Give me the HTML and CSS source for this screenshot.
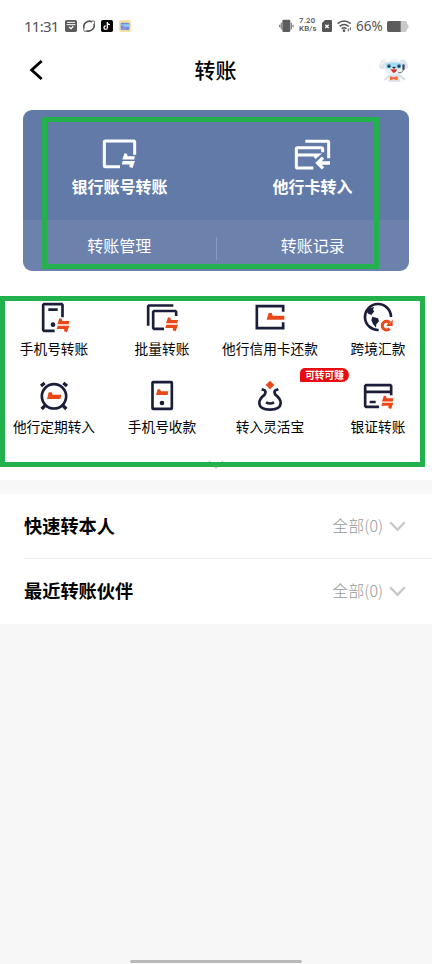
FILE: index.html
```html
<!DOCTYPE html>
<html lang="zh-CN">
<head>
<meta charset="utf-8">
<meta name="viewport" content="width=device-width">
<title>转账</title>
<link rel="stylesheet" href="styles.css">
</head>
<body>
<svg width="0" height="0" class="defs">
  <symbol id="swap" viewBox="0 0 38 42" overflow="visible">
    <path d="M7 0L14 1L16 8H37L35 18H1ZM2 22H37L30 42L21 39L22 32H-1Z"/>
  </symbol>
</svg>
<div class="screen">
  <header class="status">
    <span class="clock">11:31</span>
    <div class="status-left">
      <svg width="12" height="12" viewBox="0 0 36 36"><rect width="36" height="36" rx="5" fill="#5b5b5b"/><path d="M6 7H30M5 14H31" stroke="#fff" stroke-width="3"/><path d="M12 21L18 26L25 19" fill="none" stroke="#fff" stroke-width="4"/></svg>
      <svg width="12" height="12" viewBox="0 0 36 36"><path d="M3 25C-1 11 13 0 27 5M10 33C24 36 37 25 33 12" fill="none" stroke="#555" stroke-width="5"/><path d="M3 24Q-1 37 11 33M26 4Q39-1 33 13" fill="none" stroke="#666" stroke-width="3"/></svg>
      <svg width="12" height="12" viewBox="0 0 36 36"><rect width="36" height="36" rx="5" fill="#060606"/><path d="M19 6V23A5 5 0 1 1 14 18M19 8Q21 14 27 14" fill="none" stroke="#fff" stroke-width="4"/><path d="M22 23Q20 30 13 29" fill="none" stroke="#e64c62" stroke-width="1.5"/></svg>
      <svg width="12" height="12" viewBox="0 0 36 36"><rect width="36" height="36" rx="7" fill="#f7dfa0"/><rect x="5" y="8" width="26" height="22" rx="3" fill="#648ede"/><path d="M6 12H30V17H6Z" fill="#79bdf2"/><path d="M7 22H23V29H7Z" fill="#9692df"/><path d="M14 18H30" stroke="#fff" stroke-width="2"/></svg>
    </div>
    <div class="status-right">
      <svg width="15" height="14" viewBox="0 0 45 42"><rect x="10" y="2" width="24" height="37" rx="4" fill="#5d5d5d"/><path d="M7 11V31M2 17V25M37 11V31M42 17V25" stroke="#888" stroke-width="4"/></svg>
      <div class="speed"><span>7.20</span><span>KB/s</span></div>
      <svg width="10" height="12" viewBox="0 0 30 36"><path d="M9 0H26Q30 0 30 4V32Q30 36 26 36H4Q0 36 0 32V9Z" fill="#555"/><path d="M10 14L20 24M20 14L10 24" stroke="#fff" stroke-width="4"/></svg>
      <svg class="wifi" width="15" height="12" viewBox="0 0 45 36"><path d="M2 11Q21-5 41 11M8 19Q21 8 35 19M14 26Q21 20 29 26" fill="none" stroke="#555" stroke-width="4.5"/><circle cx="21" cy="32" r="4" fill="#555"/><path d="M34 26V34M40 22V31" stroke="#555" stroke-width="3"/></svg>
      <span class="percent">66%</span>
      <svg width="22" height="11" viewBox="0 0 66 33"><rect width="60" height="33" rx="6" fill="#c9c9c9"/><path d="M60 9Q65 10 65 17Q65 23 60 24Z" fill="#c9c9c9"/><path d="M6 0H41V33H6Q0 33 0 27V6Q0 0 6 0Z" fill="#5c5c5c"/></svg>
    </div>
  </header>

  <nav class="nav">
    <svg width="14" height="20" viewBox="0 0 42 60"><path d="M38 3L8 30L38 57" fill="none" stroke="#000" stroke-width="8.5"/></svg>
    <h1>转账</h1>
    <svg width="30" height="24" viewBox="0 0 90 72">
      <path d="M24 11Q20 1 12 5Q0 11 1 27Q3 35 15 34L29 25ZM62 10Q69 0 78 6Q88 16 87 29Q83 35 74 32L58 24Z" fill="#dfe4ec"/>
      <path d="M24 7Q10 10 6 22" fill="none" stroke="#f4f6fa" stroke-width="5"/>
      <ellipse cx="45" cy="29" rx="29" ry="25" fill="#eceff4"/>
      <path d="M28 50L15 64Q15 69 22 66L30 59L27 71H65L61 58L76 68L80 62L62 49Z" fill="#dde2e9"/>
      <path d="M20 16Q44 9 69 16L66 31Q55 35 50 29H39Q33 35 21 31Z" fill="#a9dcf2"/>
      <circle cx="30" cy="24" r="6" fill="#4d91b8"/><circle cx="60" cy="24" r="6" fill="#4d91b8"/>
      <circle cx="30" cy="25" r="3.5" fill="#173344"/><circle cx="60" cy="25" r="3.5" fill="#173344"/>
      <path d="M39 28Q45 25 51 28L45 33Z" fill="#252a35"/><path d="M34 34H54Q51 46 42 44Z" fill="#d6342b"/>
      <path d="M74 34Q70 46 58 44" fill="none" stroke="#66738a" stroke-width="3"/><rect x="70" y="19" width="7" height="17" rx="3" fill="#414d68"/>
      <path d="M33 55L44 58L56 55V67L44 64L33 67Z" fill="#ef6a3c"/>
    </svg>
  </nav>

  <section class="card">
    <div class="card-main">
      <div class="action">
        <svg width="37" height="32" viewBox="0 0 111 96"><path d="M101 50V12Q101 9 98 9H13Q10 9 10 12V83Q10 86 13 86H57" fill="none" stroke="#fff" stroke-width="9"/><use href="#swap" x="62" y="46" width="42" height="44" fill="#fff"/></svg>
        <span>银行账号转账</span>
      </div>
      <div class="action">
        <svg width="37" height="32" viewBox="0 0 111 96"><path d="M34 10H101Q104 10 104 13V61M86 43V33Q86 29 82 29H10Q7 29 7 33V86Q7 90 11 90H58M7 51H72L62 60" fill="none" stroke="#fff" stroke-width="9"/><path d="M108 75H74M87 59L71 75L87 91" fill="none" stroke="#fff" stroke-width="10"/></svg>
        <span>他行卡转入</span>
      </div>
    </div>
    <div class="card-foot"><span>转账管理</span><i></i><span>转账记录</span></div>
    <div class="frame frame-card"></div>
  </section>

  <section class="services">
    <div class="service">
      <svg width="36" height="32" viewBox="0 0 108 96"><path class="ink" d="M79.5 46V9L77 6.5H24L21.5 9V84L24 86.5H56M37 23H65"/><circle class="dot" cx="51" cy="68" r="7"/><use class="red" href="#swap" x="63" y="49" width="38" height="42"/></svg>
      <span>手机号转账</span>
    </div>
    <div class="service">
      <svg width="36" height="32" viewBox="0 0 108 96"><path class="ink" d="M12.5 71V13L15 10.5H88M96.5 42V30L94 27H30L27.5 30V78L30 80.5H60"/><use class="red" href="#swap" x="65" y="46" width="38" height="42"/></svg>
      <span>批量转账</span>
    </div>
    <div class="service">
      <svg width="36" height="32" viewBox="0 0 108 96"><path class="ink" d="M93.5 29V12.5H14.5V78.5H93.5V61"/><path class="red" d="M50 33L59 33L62 41H97V53H44Z"/></svg>
      <span>他行信用卡还款</span>
    </div>
    <div class="service">
      <svg width="36" height="32" viewBox="0 0 108 96"><path class="ink" d="M93 45A39 39 0 1 0 56 84"/><path class="dot" d="M20 29Q29 16 42 15L39 24L43 28L34 39L25 35ZM37 44L54 49L57 58L49 67L48 77L39 66L34 54Z"/><path d="M90 63A13 13 0 1 0 89 80" fill="none" stroke="#e94818" stroke-width="9"/><path class="red" d="M98 52V72H79L84 63L90 65Z"/></svg>
      <span>跨境汇款</span>
    </div>
    <div class="service">
      <svg width="36" height="32" viewBox="0 0 108 96"><circle class="ink" cx="54" cy="49" r="36.5"/><path class="ink thick" d="M15 18L26 9M93 18L82 9M17 87L27 77M91 87L81 77"/><path class="red" d="M38 37L47 37L50 44H76L73 57H33Z"/></svg>
      <span>他行定期转入</span>
    </div>
    <div class="service">
      <svg width="36" height="32" viewBox="0 0 108 96"><rect class="ink" x="25.5" y="6.5" width="58" height="80" rx="2"/><path class="red" d="M41 28L48 28L51 34H73L71 45H36Z"/><circle class="dot" cx="54" cy="69" r="7"/></svg>
      <span>手机号收款</span>
    </div>
    <div class="service">
      <svg width="36" height="32" viewBox="0 0 108 96"><path class="red" d="M54 2L67 15L54 28L41 15Z"/><path class="ink" d="M29 28L38 31Q43 35 38 44C26 53 21 62 22 71Q24 89 54 89T86 71C87 62 82 53 70 44Q65 35 70 31L79 28M42 67Q54 74 66 67"/></svg>
      <span>转入灵活宝</span>
      <b class="badge">可转可赚</b>
    </div>
    <div class="service">
      <svg width="36" height="32" viewBox="0 0 108 96"><path class="ink" d="M93.5 46V18L91 15.5H18L15.5 18V78L18 80.5H57M15 35.5H93M29 66H47"/><use class="red" href="#swap" x="64" y="47" width="38" height="40"/></svg>
      <span>银证转账</span>
    </div>
    <svg class="more" width="16" height="9" viewBox="0 0 16 9"><path d="M1 1L8 8L15 1" fill="none" stroke="#c6cec8" stroke-width="1.5"/></svg>
    <div class="frame frame-services"></div>
  </section>

  <section class="list">
    <div class="row"><h2>快速转本人</h2><span>全部(0)</span><svg width="17" height="11" viewBox="0 0 17 11"><path d="M1.2 1.2L8.5 8.8L15.8 1.2" fill="none" stroke="#c8c8c8" stroke-width="2.3"/></svg></div>
    <div class="row"><h2>最近转账伙伴</h2><span>全部(0)</span><svg width="17" height="11" viewBox="0 0 17 11"><path d="M1.2 1.2L8.5 8.8L15.8 1.2" fill="none" stroke="#c8c8c8" stroke-width="2.3"/></svg></div>
  </section>
  <div class="home"></div>
</div>
</body>
</html>
```
FILE: styles.css
```css
* { box-sizing: border-box; }
body { margin: 0; background: #f7f7f7; font-family: "Noto Sans CJK SC", sans-serif; color: #111; }
svg { display: block; flex: none; }
h1, h2 { margin: 0; }
.defs { position: absolute; }
.screen { width: 432px; height: 964px; display: flex; flex-direction: column; overflow: hidden; }

.status { height: 46px; padding: 6px 23px 0 24px; background: #fff; display: flex; align-items: center; color: #555; font-family: "Noto Sans", sans-serif; }
.clock { width: 41px; margin-top: -1px; font-size: 15px; line-height: 20px; letter-spacing: -.75px; }
.status-left { display: flex; gap: 6px; }
.status-right { margin-left: auto; display: flex; align-items: center; }
.speed { width: 18px; margin: -2px 5px 0; display: flex; flex-direction: column; font-family: Roboto, sans-serif; font-size: 7.8px; line-height: 8px; font-weight: 500; letter-spacing: .2px; white-space: nowrap; }
.speed span { height: 8px; }
.wifi { margin-left: 5px; }
.percent { width: 35px; padding-left: 4px; font-size: 13.5px; line-height: 20px; }

.nav { height: 64px; padding: 0 23px 16px 29px; background: #fff; display: flex; align-items: center; justify-content: space-between; }
.nav h1 { margin: -2px 0 0 9px; font-size: 21px; line-height: 30px; font-weight: 500; color: #000; }

.card { position: relative; height: 161px; padding: 0 23px; background: #fff; color: #fff; }
.card-main { height: 110px; padding-top: 28px; background: #617aa8; border-radius: 9px 9px 0 0; display: grid; grid-template-columns: 1fr 1fr; }
.action { display: flex; flex-direction: column; align-items: center; }
.action span { margin-top: 4px; font-size: 16px; line-height: 24px; font-weight: 700; }
.card-foot { height: 51px; background: #6c82ad; border-radius: 0 0 9px 9px; display: grid; grid-template-columns: 1fr 1px 1fr; align-items: center; text-align: center; font-size: 16px; line-height: 24px; }
.card-foot span { margin-top: -2px; }
.card-foot i { height: 23px; margin-top: 5px; background: #8a9bbf; }

.frame { position: absolute; border: 5px solid #22b14c; }
.frame-card { left: 42px; top: 7px; width: 337px; height: 152px; }
.frame-services { left: 0; top: 25px; width: 425px; height: 171px; }

.services { position: relative; height: 209px; padding-top: 31px; background: #fff; display: grid; grid-template-columns: repeat(4, 108px); grid-template-rows: 78px 78px; align-content: start; }
.service { position: relative; display: flex; flex-direction: column; align-items: center; }
.service span { margin-top: 4px; font-size: 13.7px; line-height: 20px; white-space: nowrap; color: #000; }
.ink { fill: none; stroke: #1b1e38; stroke-width: 8; }
.thick { stroke-width: 10; }
.dot { fill: #1b1e38; }
.red { fill: #e94818; }
.badge { position: absolute; left: 84px; top: -12px; width: 49px; height: 14px; border-radius: 5px 7px 7px 1px; background: #e80b10; color: #fff; font-size: 9.7px; line-height: 14px; text-align: center; font-weight: 700; }
.more { position: absolute; left: 208px; top: 189px; }

.list { margin-top: 14px; background: #fff; }
.row { height: 66px; margin-left: 24px; padding: 0 26px 1px 0; display: flex; align-items: center; }
.row + .row { border-top: 1px solid #eee; }
.row:first-child { height: 64px; padding-bottom: 0; }
.row h2 { margin: -2px auto 0 0; font-size: 18.2px; line-height: 28px; font-weight: 700; color: #000; }
.row span { margin: -2px 6px 0 0; font-size: 16px; line-height: 24px; color: #999; font-weight: 300; }
.home { width: 172px; height: 3px; margin: auto auto 1px; border-radius: 2px; background: #b9b9b9; }
```
